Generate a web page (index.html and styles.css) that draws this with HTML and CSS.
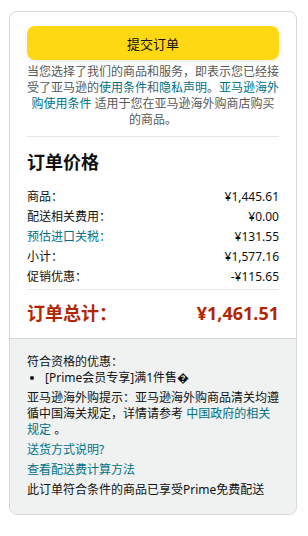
FILE: index.html
```html
<!DOCTYPE html>
<html lang="zh-CN">
<head>
<meta charset="utf-8">
<link rel="stylesheet" href="styles.css">
</head>
<body>
<div class="card">
  <div class="main">
    <button class="submit">提交订单</button>
    <p class="legal">当您选择了我们的商品和服务，即表示您已经接受了亚马逊的<a href="#">使用条件</a>和<a href="#">隐私声明</a>。<a href="#">亚马逊海外购使用条件</a> 适用于您在亚马逊海外购商店购买的商品。</p>
    <hr class="rule">
    <h2 class="title">订单价格</h2>
    <div class="rows">
      <div class="row"><span>商品：</span><span>¥1,445.61</span></div>
      <div class="row"><span>配送相关费用：</span><span>¥0.00</span></div>
      <div class="row"><a href="#">预估进口关税：</a><span>¥131.55</span></div>
      <div class="row"><span>小计：</span><span>¥1,577.16</span></div>
      <div class="row"><span>促销优惠：</span><span>-¥115.65</span></div>
    </div>
    <hr class="rule rule-tight">
    <div class="total"><span>订单总计：</span><span>¥1,461.51</span></div>
  </div>
  <div class="foot">
    <div class="promo">
      <div>符合资格的优惠：</div>
      <ul class="list"><li>[Prime会员专享]满1件售�</li></ul>
    </div>
    <p class="note">亚马逊海外购提示：亚马逊海外购商品清关均遵循中国海关规定，详情请参考 <a href="#">中国政府的相关规定</a> 。</p>
    <a class="flink" href="#">送货方式说明?</a>
    <a class="flink" href="#">查看配送费计算方法</a>
    <p class="note">此订单符合条件的商品已享受Prime免费配送</p>
  </div>
</div>
</body>
</html>
```

FILE: styles.css
```css
* { box-sizing: border-box; }
body {
  margin: 0;
  background: #fff;
  font-family: "Noto Sans", "Noto Sans CJK SC", sans-serif;
  color: #0F1111;
}
a { color: #007185; text-decoration: none; }
.card {
  margin: 11px 11px 0 9px;
  border: 1px solid #D5D9D9;
  border-radius: 8px;
  overflow: hidden;
}
.main {
  padding: 14px 17px 13px 17px;
}
.submit {
  display: block;
  width: 100%;
  height: 34px;
  border: none;
  border-radius: 8px;
  background: #FFD814;
  box-shadow: 0 2px 5px rgba(213,217,217,.5);
  font-family: inherit;
  font-size: 13px;
  color: #0F1111;
  padding: 0;
}
.legal {
  margin: 4px -1px 0;
  font-size: 12px;
  line-height: 16px;
  color: #565959;
  text-align: center;
}
.rule {
  margin: 8px 0 0;
  border: none;
  border-top: 1px solid #E7E7E7;
  height: 0;
}
.rule-tight { margin-top: 2px; }
.title {
  margin: 13px 0 0;
  font-size: 18px;
  line-height: 24px;
  font-weight: 700;
}
.rows { margin-top: 13px; }
.row {
  display: flex;
  justify-content: space-between;
  font-size: 12px;
  line-height: 20px;
}
.total {
  display: flex;
  justify-content: space-between;
  margin-top: 11px;
  font-size: 18px;
  line-height: 24px;
  font-weight: 700;
  color: #B12704;
}
.foot {
  background: #F0F2F2;
  border-top: 1px solid #D5D9D9;
  padding: 15px 17px 16px;
  display: flex;
  flex-direction: column;
  gap: 4px;
  font-size: 12px;
  line-height: 16px;
}
.list {
  margin: 0;
  padding-left: 18px;
}
.note { margin: 0; }
.flink { display: block; }
```
